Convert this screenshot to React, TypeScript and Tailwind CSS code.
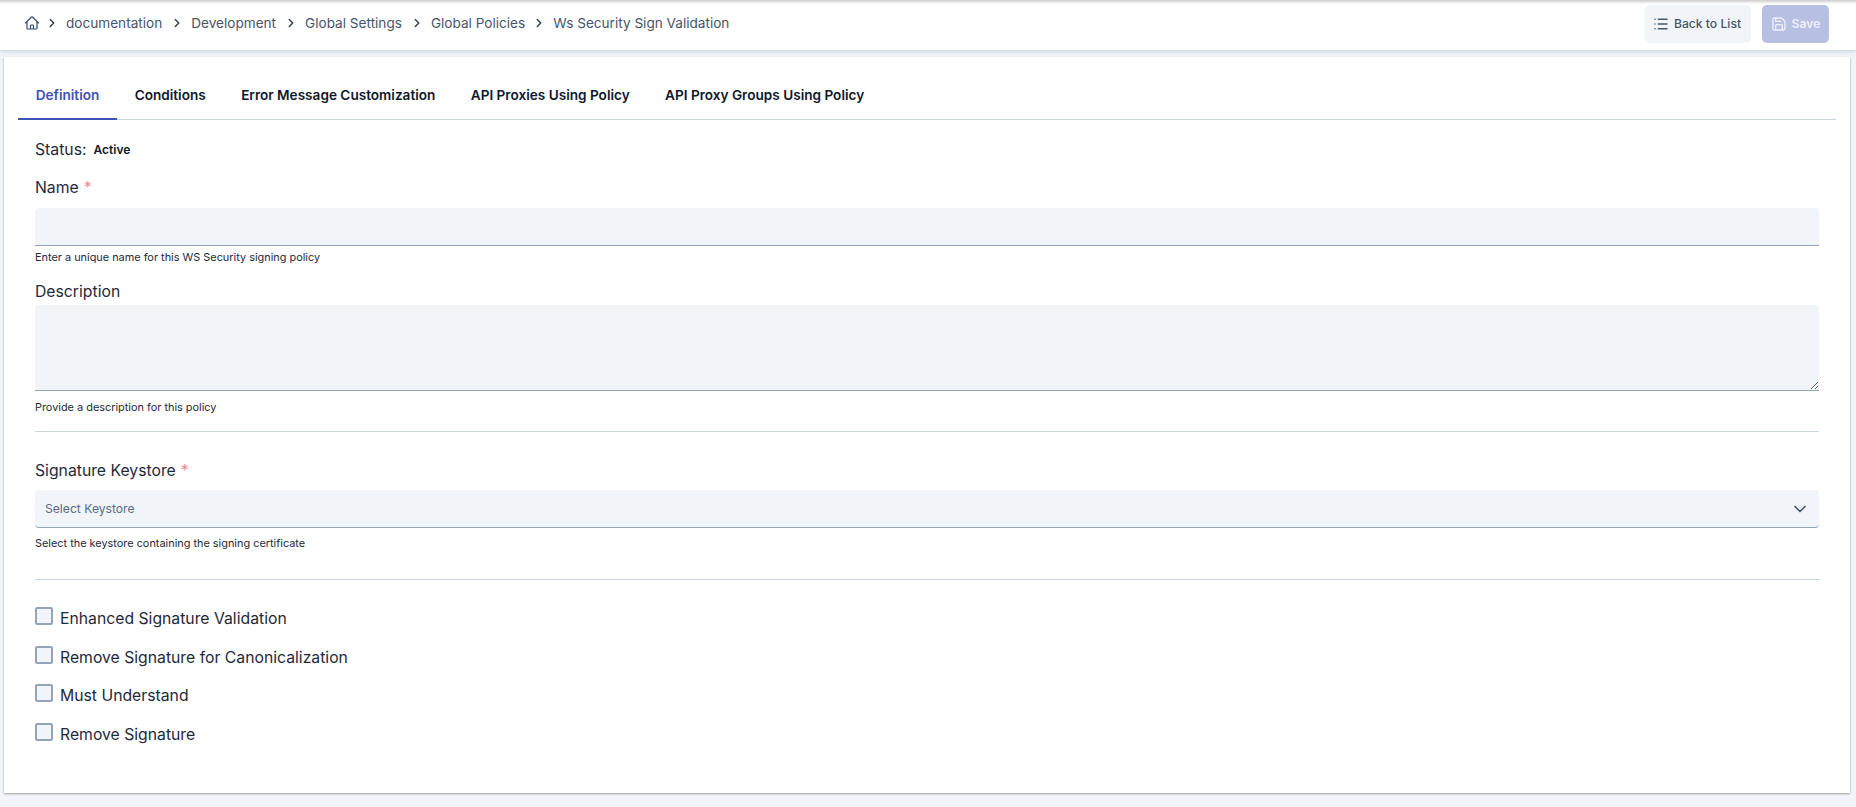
import { ChevronDown, ChevronRight, List, Save } from "lucide-react";
import { HiOutlineHome } from "react-icons/hi2";

const crumbs = ["documentation", "Development", "Global Settings", "Global Policies", "Ws Security Sign Validation"];
const tabs = ["Definition", "Conditions", "Error Message Customization", "API Proxies Using Policy", "API Proxy Groups Using Policy"];
const checks = ["Enhanced Signature Validation", "Remove Signature for Canonicalization", "Must Understand", "Remove Signature"];

function Help({ children }: { children: string }) {
  return <p className="text-[10.9px] leading-[16px] text-[#1e293b]">{children}</p>;
}

function Label({ text, required }: { text: string; required?: boolean }) {
  return (
    <label className="block text-[15.75px] leading-[24px] text-[#1e293b]">
      {text}
      {required && <span className="ml-[5px] text-[#f28b8b]">*</span>}
    </label>
  );
}

export default function App() {
  return (
    <div className="h-[807px] w-[1856px] overflow-hidden bg-[#f1f5f9] font-['Inter',sans-serif]">
      <header className="flex h-[50px] items-center justify-between bg-white pb-[2px] pl-[24px] pr-[27px] shadow-[0_1px_4px_rgba(100,116,139,0.3),inset_0_4px_3px_-2px_rgba(0,0,0,0.2)]">
        <nav className="-mt-[1px] flex items-center text-[13.6px] text-[#475569]">
          <HiOutlineHome className="-mr-[3px] h-[16px] w-[16px] text-[#2c4a6e] [stroke-width:1.75]" />
          {crumbs.map((c, i) => (
            <span key={c} className="flex items-center">
              <ChevronRight
                className={
                  i === 4
                    ? "ml-[7px] mr-[7px] h-[14px] w-[14px] text-[#334155]"
                    : "ml-[8px] mr-[7px] h-[14px] w-[14px] text-[#334155]"
                }
                strokeWidth={2.5}
              />
              <span>{c}</span>
            </span>
          ))}
        </nav>
        <div className="flex items-center gap-[11px]">
          <button className="flex h-[38px] w-[106px] items-center justify-center gap-[5px] rounded-[5px] bg-[#f1f5f9] pr-[2px] text-[12.16px] font-medium text-[#475569]">
            <List className="h-[16px] w-[16px]" strokeWidth={2.25} />
            Back to List
          </button>
          <button className="flex h-[38px] w-[67px] items-center justify-center gap-[5px] rounded-[5px] bg-[#b7bfe2] text-[12.16px] font-semibold text-[#eef0fa]">
            <Save className="h-[16px] w-[16px]" />
            Save
          </button>
        </div>
      </header>

      <main className="ml-[4px] mt-[7px] h-[736px] w-[1846px] bg-white px-[14px] pt-[20px] shadow-[0_1px_2px_rgba(0,0,0,0.35)]">
        <div className="flex h-[43px] items-start border-b border-[#cbd5e1]">
          {tabs.map((t, i) => (
            <div
              key={t}
              className={
                i === 0
                  ? "-mb-px h-[43px] border-b-2 border-[#3f51b5] px-[17.7px] pt-[8px] text-[13.6px] leading-[20px] font-semibold text-[#3f51b5]"
                  : "-mb-px h-[43px] border-b-2 border-transparent px-[17.7px] pt-[8px] text-[13.6px] leading-[20px] font-semibold text-[#0f172a]"
              }
            >
              {t}
            </div>
          ))}
        </div>

        <div className="px-[17px]">
          <div className="mt-[18px] flex h-[24px] items-center text-[15.75px] text-[#1e293b]">
            Status:
            <span className="ml-[7px] text-[12px] font-semibold text-[#0f172a]">Active</span>
          </div>

          <div className="mt-[14px]">
            <Label text="Name" required />
          </div>
          <div className="mt-[8px] h-[38px] rounded-t-[4px] border-b border-[#94a3b8] bg-[#f1f5f9]" />
          <div className="mt-[3px]">
            <Help>Enter a unique name for this WS Security signing policy</Help>
          </div>

          <div className="mt-[15px]">
            <Label text="Description" />
          </div>
          <textarea className="mt-[1px] block h-[86px] w-full rounded-t-[4px] border-b border-[#94a3b8] bg-[#f1f5f9]" />
          <div className="mt-[8px]">
            <Help>Provide a description for this policy</Help>
          </div>

          <div className="mt-[16px] h-px bg-[#cbd5e1]" />

          <div className="mt-[27px]">
            <Label text="Signature Keystore" required />
          </div>
          <div className="mt-[7px] flex h-[38px] items-center justify-between rounded-[4px] border-b border-[#94a3b8] bg-[#f1f5f9] pl-[10px] pr-[9px] text-[12.15px] text-[#5b6b80]">
            <span className="mt-[2px]">Select Keystore</span>
            <ChevronDown className="h-[20px] w-[20px] text-[#475569]" />
          </div>
          <div className="mt-[7px]">
            <Help>Select the keystore containing the signing certificate</Help>
          </div>

          <div className="mt-[28px] h-px bg-[#cbd5e1]" />

          <ul className="mt-[27px] flex flex-col gap-[20.67px]">
            {checks.map((c) => (
              <li key={c} className="flex h-[18px] items-start gap-[7px]">
                <span className="h-[18px] w-[18px] shrink-0 rounded-[2px] border-2 border-[#94a3b8] bg-[#f1f5f9]" />
                <span className="mt-[2px] text-[15.75px] leading-[20px] text-[#1e293b]">{c}</span>
              </li>
            ))}
          </ul>
        </div>
      </main>
    </div>
  );
}
